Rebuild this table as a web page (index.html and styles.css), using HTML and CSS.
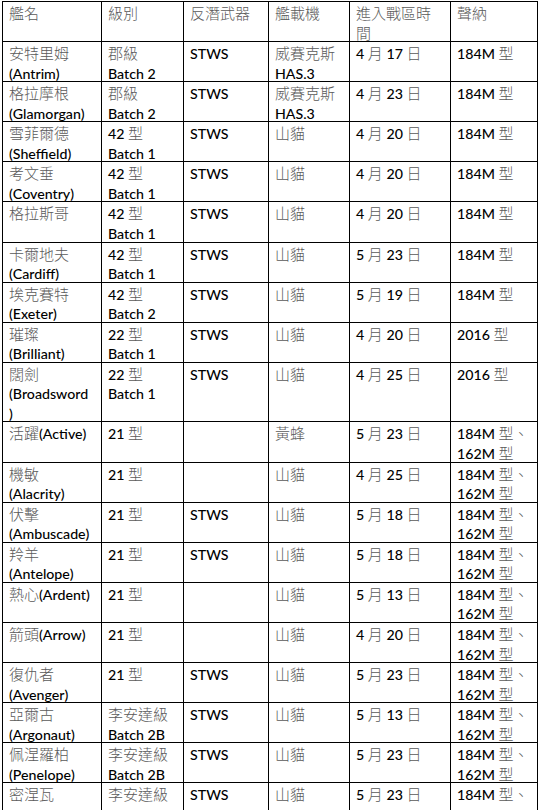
FILE: index.html
```html
<!DOCTYPE html>
<html lang="zh-Hant">
<head>
<meta charset="utf-8">
<title>艦艇列表</title>
<link rel="stylesheet" href="styles.css">
</head>
<body>
<table class="ships">
<colgroup>
<col class="c1"><col class="c2"><col class="c3"><col class="c4"><col class="c5"><col class="c6">
</colgroup>
<thead>
<tr><th><span class="z">艦名</span></th><th><span class="z">級別</span></th><th><span class="z">反潛武器</span></th><th><span class="z">艦載機</span></th><th><span class="z">進入戰區時</span><br><span class="z">間</span></th><th><span class="z">聲納</span></th></tr>
</thead>
<tbody>
<tr><td><span class="z">安特里姆</span><br>(Antrim)</td><td><span class="z">郡級</span><br>Batch 2</td><td>STWS</td><td><span class="z">威賽克斯</span><br>HAS.3</td><td>4 <span class="z">月</span> 17 <span class="z">日</span></td><td>184M <span class="z">型</span></td></tr>
<tr><td><span class="z">格拉摩根</span><br>(Glamorgan)</td><td><span class="z">郡級</span><br>Batch 2</td><td>STWS</td><td><span class="z">威賽克斯</span><br>HAS.3</td><td>4 <span class="z">月</span> 23 <span class="z">日</span></td><td>184M <span class="z">型</span></td></tr>
<tr><td><span class="z">雪菲爾德</span><br>(Sheffield)</td><td>42 <span class="z">型</span><br>Batch 1</td><td>STWS</td><td><span class="z">山貓</span></td><td>4 <span class="z">月</span> 20 <span class="z">日</span></td><td>184M <span class="z">型</span></td></tr>
<tr><td><span class="z">考文垂</span><br>(Coventry)</td><td>42 <span class="z">型</span><br>Batch 1</td><td>STWS</td><td><span class="z">山貓</span></td><td>4 <span class="z">月</span> 20 <span class="z">日</span></td><td>184M <span class="z">型</span></td></tr>
<tr><td><span class="z">格拉斯哥</span></td><td>42 <span class="z">型</span><br>Batch 1</td><td>STWS</td><td><span class="z">山貓</span></td><td>4 <span class="z">月</span> 20 <span class="z">日</span></td><td>184M <span class="z">型</span></td></tr>
<tr><td><span class="z">卡爾地夫</span><br>(Cardiff)</td><td>42 <span class="z">型</span><br>Batch 1</td><td>STWS</td><td><span class="z">山貓</span></td><td>5 <span class="z">月</span> 23 <span class="z">日</span></td><td>184M <span class="z">型</span></td></tr>
<tr><td><span class="z">埃克賽特</span><br>(Exeter)</td><td>42 <span class="z">型</span><br>Batch 2</td><td>STWS</td><td><span class="z">山貓</span></td><td>5 <span class="z">月</span> 19 <span class="z">日</span></td><td>184M <span class="z">型</span></td></tr>
<tr><td><span class="z">璀璨</span><br>(Brilliant)</td><td>22 <span class="z">型</span><br>Batch 1</td><td>STWS</td><td><span class="z">山貓</span></td><td>4 <span class="z">月</span> 20 <span class="z">日</span></td><td>2016 <span class="z">型</span></td></tr>
<tr><td><span class="z">闊劍</span><br>(Broadsword<br>)</td><td>22 <span class="z">型</span><br>Batch 1</td><td>STWS</td><td><span class="z">山貓</span></td><td>4 <span class="z">月</span> 25 <span class="z">日</span></td><td>2016 <span class="z">型</span></td></tr>
<tr><td><span class="z">活躍</span>(Active)</td><td>21 <span class="z">型</span></td><td></td><td><span class="z">黃蜂</span></td><td>5 <span class="z">月</span> 23 <span class="z">日</span></td><td>184M <span class="z">型、</span><br>162M <span class="z">型</span></td></tr>
<tr><td><span class="z">機敏</span><br>(Alacrity)</td><td>21 <span class="z">型</span></td><td></td><td><span class="z">山貓</span></td><td>4 <span class="z">月</span> 25 <span class="z">日</span></td><td>184M <span class="z">型、</span><br>162M <span class="z">型</span></td></tr>
<tr><td><span class="z">伏擊</span><br>(Ambuscade)</td><td>21 <span class="z">型</span></td><td>STWS</td><td><span class="z">山貓</span></td><td>5 <span class="z">月</span> 18 <span class="z">日</span></td><td>184M <span class="z">型、</span><br>162M <span class="z">型</span></td></tr>
<tr><td><span class="z">羚羊</span><br>(Antelope)</td><td>21 <span class="z">型</span></td><td>STWS</td><td><span class="z">山貓</span></td><td>5 <span class="z">月</span> 18 <span class="z">日</span></td><td>184M <span class="z">型、</span><br>162M <span class="z">型</span></td></tr>
<tr><td><span class="z">熱心</span>(Ardent)</td><td>21 <span class="z">型</span></td><td></td><td><span class="z">山貓</span></td><td>5 <span class="z">月</span> 13 <span class="z">日</span></td><td>184M <span class="z">型、</span><br>162M <span class="z">型</span></td></tr>
<tr><td><span class="z">箭頭</span>(Arrow)</td><td>21 <span class="z">型</span></td><td></td><td><span class="z">山貓</span></td><td>4 <span class="z">月</span> 20 <span class="z">日</span></td><td>184M <span class="z">型、</span><br>162M <span class="z">型</span></td></tr>
<tr><td><span class="z">復仇者</span><br>(Avenger)</td><td>21 <span class="z">型</span></td><td>STWS</td><td><span class="z">山貓</span></td><td>5 <span class="z">月</span> 23 <span class="z">日</span></td><td>184M <span class="z">型、</span><br>162M <span class="z">型</span></td></tr>
<tr><td><span class="z">亞爾古</span><br>(Argonaut)</td><td><span class="z">李安達級</span><br>Batch 2B</td><td>STWS</td><td><span class="z">山貓</span></td><td>5 <span class="z">月</span> 13 <span class="z">日</span></td><td>184M <span class="z">型、</span><br>162M <span class="z">型</span></td></tr>
<tr><td><span class="z">佩涅羅柏</span><br>(Penelope)</td><td><span class="z">李安達級</span><br>Batch 2B</td><td>STWS</td><td><span class="z">山貓</span></td><td>5 <span class="z">月</span> 23 <span class="z">日</span></td><td>184M <span class="z">型、</span><br>162M <span class="z">型</span></td></tr>
<tr class="cut"><td><span class="z">密涅瓦</span></td><td><span class="z">李安達級</span></td><td>STWS</td><td><span class="z">山貓</span></td><td>5 <span class="z">月</span> 23 <span class="z">日</span></td><td>184M <span class="z">型、</span></td></tr>
</tbody>
</table>
</body>
</html>
```
FILE: styles.css
```css
html, body {
  margin: 0;
  padding: 0;
  background: #ffffff;
}
body {
  height: 810px;
  overflow: hidden;
}
.ships {
  margin: 1px 0 0 2px;
  width: 535px;
  border-collapse: collapse;
  table-layout: fixed;
  font-family: Lato, "Noto Sans CJK TC", sans-serif;
  font-size: 14.2px;
  font-weight: 500;
  line-height: 19.55px;
  color: #000000;
}
.c1 { width: 99px; }
.c2 { width: 82px; }
.c3 { width: 85px; }
.c4 { width: 81px; }
.c5 { width: 101px; }
.c6 { width: 87px; }
.ships th,
.ships td {
  border: 1px solid #000000;
  padding: 2px 4px 0 6px;
  vertical-align: top;
  text-align: left;
  font-weight: 500;
  white-space: nowrap;
}
.ships th::after,
.ships td::after {
  content: "";
  display: block;
  margin-top: -2px;
}
.z {
  font-family: "Noto Sans CJK TC", sans-serif;
  font-size: 15px;
  line-height: 1;
  font-weight: 300;
  color: #5a5a5a;
}
.cut td {
  height: 25px;
}
```
